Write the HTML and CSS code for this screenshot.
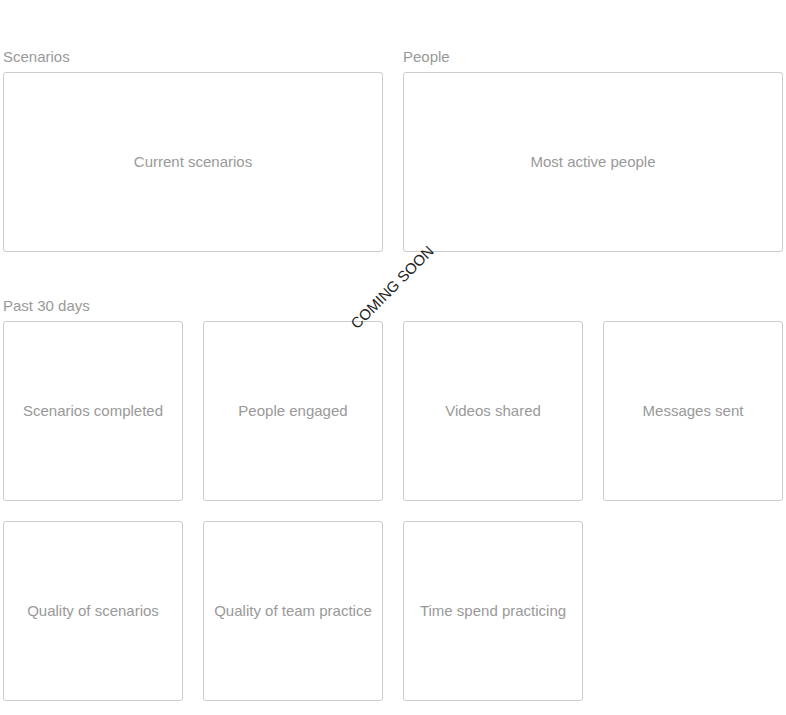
FILE: index.html
```html
<!DOCTYPE html>
<html lang="en">
<head>
  <meta charset="UTF-8" />
  <title>Dashboard</title>
  <link rel="stylesheet" href="styles.css">
</head>
<body>

<div class="dashboard">
  <div class="section section-top">
    <div class="col">
      <div class="section-title">Scenarios</div>
      <div class="card">Current scenarios</div>
    </div>
    <div class="col">
      <div class="section-title">People</div>
      <div class="card">Most active people</div>
    </div>
  </div>

  <div class="section section-past">
    <div class="section-title">Past 30 days</div>
    <div class="grid">
      <div class="card">Scenarios completed</div>
      <div class="card">People engaged</div>
      <div class="card">Videos shared</div>
      <div class="card">Messages sent</div>
      <div class="card">Quality of scenarios</div>
      <div class="card">Quality of team practice</div>
      <div class="card">Time spend practicing</div>
    </div>
  </div>

  <div class="coming-soon">COMING SOON</div>
</div>

</body>
</html>
```

FILE: styles.css
```css
body {
  margin: 0;
  padding: 0 3px;
  font-family: "Liberation Sans", Arial, sans-serif;
  background: #fff;
  color: #999;
}
.dashboard {
  position: relative;
  width: 780px;
}
.section-top {
  display: flex;
  gap: 20px;
  padding-top: 48px;
}
.section-top .col {
  width: 380px;
}
.section-title {
  font-size: 15px;
  line-height: 18px;
  margin-bottom: 6px;
  color: #999;
}
.card {
  box-sizing: border-box;
  height: 180px;
  padding-bottom: 2px;
  border: 1px solid #ccc;
  border-radius: 3px;
  display: flex;
  align-items: center;
  justify-content: center;
  font-size: 15px;
  color: #999;
  text-align: center;
}
.section-past {
  margin-top: 45px;
}
.past .section-title {
  margin-bottom: 6px;
}
.grid {
  display: grid;
  grid-template-columns: repeat(4, 180px);
  gap: 20px;
}
.coming-soon {
  position: absolute;
  left: 389px;
  top: 287px;
  transform: translate(-50%, -50%) rotate(-45deg);
  font-size: 15px;
  color: #222;
  white-space: nowrap;
}
```
